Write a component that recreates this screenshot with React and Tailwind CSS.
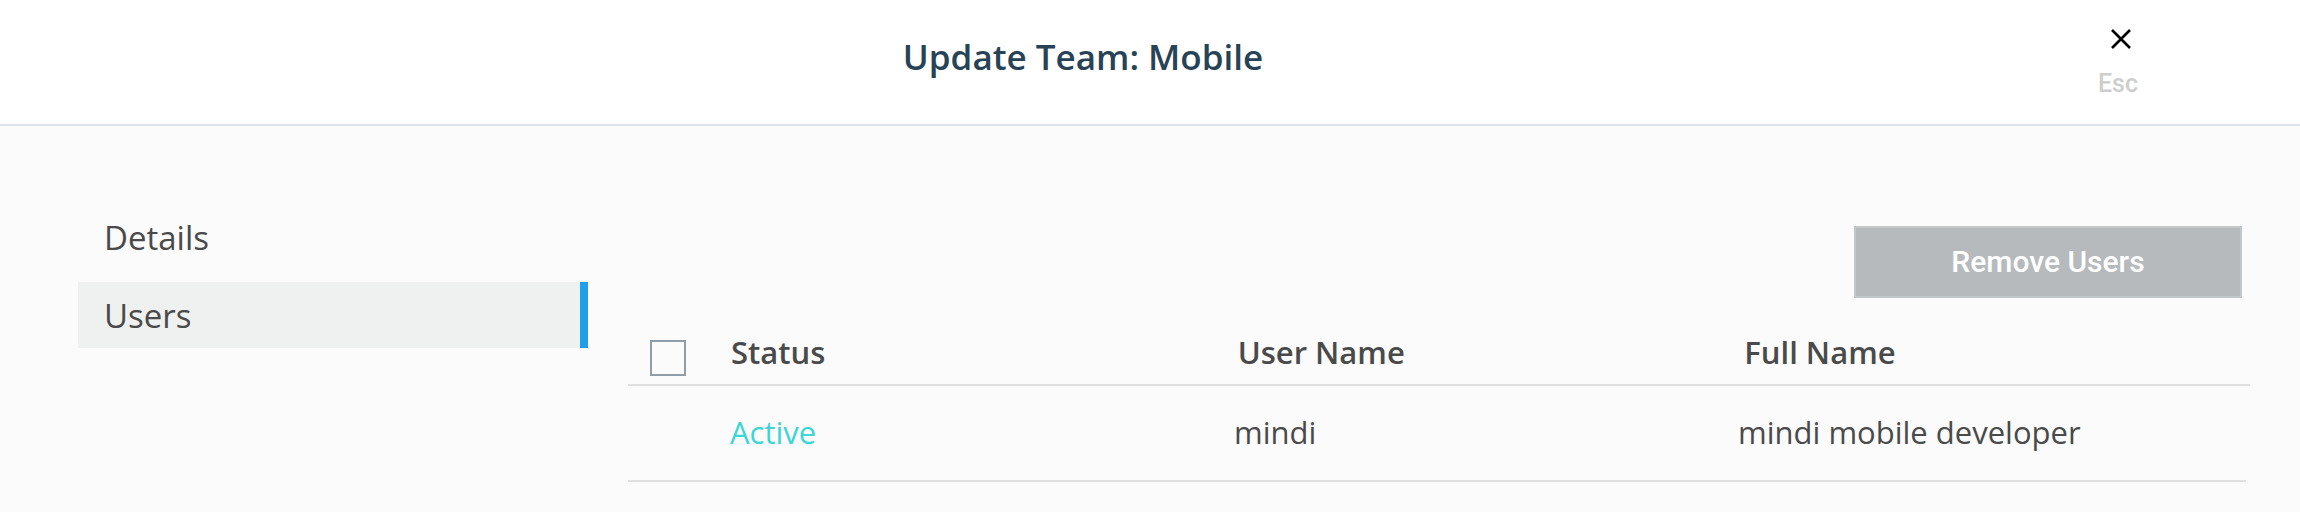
const columns = ["Status", "User Name", "Full Name"];
const users = [{ status: "Active", userName: "mindi", fullName: "mindi mobile developer" }];

function Header() {
  return (
    <header className="flex h-[126px] items-start border-b-2 border-[#dde3e8] bg-white pr-[124px] pl-[106px]">
      <h1 className="flex-1 pt-[33px] text-center text-[35px] leading-[48px] font-semibold text-[#274355]">
        Update Team: Mobile
      </h1>
      <button
        type="button"
        className="flex w-[116px] flex-col items-center gap-[19px] pt-[29px] font-['Roboto',sans-serif] text-[25px] leading-8 font-medium text-[#cecece]"
      >
        <svg
          aria-hidden="true"
          viewBox="0 0 20 20"
          className="ml-[6px] h-5 w-5 text-black"
          fill="none"
          stroke="currentColor"
          strokeWidth="2.6"
        >
          <path d="M1 1l18 18M19 1L1 19" />
        </svg>
        Esc
      </button>
    </header>
  );
}

function Sidebar() {
  return (
    <nav className="flex w-[510px] shrink-0 flex-col gap-3 text-[33px] leading-[46px] text-[#4a4a4a]">
      <a href="#details" className="border-r-8 border-transparent px-[26px] pt-[11px] pb-[9px]">
        Details
      </a>
      <a
        href="#users"
        aria-current="page"
        className="border-r-8 border-[#1e9eeb] bg-[#eff1f0] px-[26px] pt-[11px] pb-[9px]"
      >
        Users
      </a>
    </nav>
  );
}

function UsersTable() {
  return (
    <table className="block w-full text-left text-[31px] leading-[44px] text-[#4a4a4a]">
      <thead className="block">
        <tr className="grid grid-cols-[102px_1fr_1fr_1fr] border-b-2 border-[#e0e0e0] pb-2">
          <th className="flex pt-3 pl-[22px]">
            <input
              type="checkbox"
              aria-label="Select all users"
              className="h-9 w-9 appearance-none border-2 border-[#909ca6] checked:bg-[#909ca6]"
            />
          </th>
          {columns.map((name) => (
            <th key={name} className="pt-[2px] pl-px font-semibold">
              {name}
            </th>
          ))}
        </tr>
      </thead>
      <tbody className="block">
        {users.map((user) => (
          <tr
            key={user.userName}
            className="mr-1 grid grid-cols-[102px_1fr_1fr_1fr] border-b-2 border-[#e0e0e0] pt-6 pr-1 pb-[26px]"
          >
            <td />
            <td className="font-medium text-[#3dd6d5]">{user.status}</td>
            <td>{user.userName}</td>
            <td>{user.fullName}</td>
          </tr>
        ))}
      </tbody>
    </table>
  );
}

export default function App() {
  return (
    <div className="min-h-screen bg-[#fbfbfb] font-['Open_Sans',sans-serif]">
      <Header />
      <div className="flex gap-10 pr-[50px] pl-[78px]">
        <div className="pt-[78px]">
          <Sidebar />
        </div>
        <main className="min-w-0 flex-1 pt-[100px]">
          <div className="mb-[30px] flex justify-end pr-2">
            <button
              type="button"
              className="h-[72px] w-[388px] border-2 border-[#c2c7ca] bg-[#b6babd] font-['Roboto',sans-serif] text-[30px] leading-9 font-medium text-white"
            >
              Remove Users
            </button>
          </div>
          <UsersTable />
        </main>
      </div>
    </div>
  );
}
